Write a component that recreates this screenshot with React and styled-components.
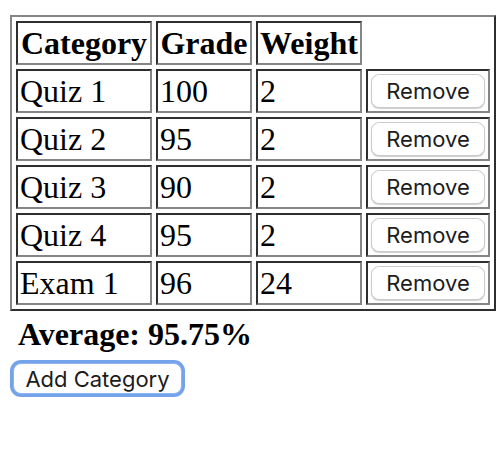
import React, { useState } from 'react';
import styled, { createGlobalStyle } from 'styled-components';

const GlobalStyle = createGlobalStyle`
    body {
        margin: 0;
        background: #ffffff;
        font-family: 'Liberation Serif', 'Times New Roman', serif;
        color: #000000;
    }
`;

const Page = styled.div`
    padding: 15px 0 40px 10px;
`;

const GradeTable = styled.table`
    border-collapse: separate;
    border-spacing: 4px;
    border: 2px solid;
    border-color: #858585 #2e2e2e #2e2e2e #858585;
    font-size: 32px;
    line-height: 36px;
`;

const HeadCell = styled.th`
    width: ${(p) => p.$w}px;
    padding: 2px;
    border: 2px solid;
    border-color: #2e2e2e #858585 #858585 #2e2e2e;
    font-weight: bold;
    text-align: center;
    white-space: nowrap;
`;

const Cell = styled.td`
    padding: 2px;
    border: 2px solid;
    border-color: #2e2e2e #858585 #858585 #2e2e2e;
    text-align: left;
    vertical-align: middle;
    white-space: nowrap;
`;

const Button = styled.button`
    display: flex;
    align-items: center;
    justify-content: center;
    box-sizing: border-box;
    height: ${(p) => (p.$small ? 31 : 34)}px;
    width: ${(p) => (p.$small ? '169px' : '114px')};
    margin: ${(p) => (p.$small ? '0' : '0 auto')};
    padding: 0;
    background: #ffffff;
    border: 1px solid ${(p) => (p.$focus ? '#8fb3ea' : '#cbcbcb')};
    border-radius: 8px;
    box-shadow: ${(p) =>
        p.$focus
            ? '0 0 0 3px #74a3ec'
            : '0 1px 1px rgba(0, 0, 0, 0.2)'};
    font-family: Inter, 'Noto Sans', sans-serif;
    font-size: 22px;
    color: #1c1c1c;
    cursor: pointer;
`;

const Average = styled.div`
    margin: 5px 0 0 8px;
    font-size: 32px;
    line-height: 36px;
    font-weight: bold;
`;

const AddWrap = styled.div`
    margin: 11px 0 0 3px;
`;

const startRows = [
    { category: 'Quiz 1', grade: 100, weight: 2 },
    { category: 'Quiz 2', grade: 95, weight: 2 },
    { category: 'Quiz 3', grade: 90, weight: 2 },
    { category: 'Quiz 4', grade: 95, weight: 2 },
    { category: 'Exam 1', grade: 96, weight: 24 },
];

const App = () => {
    const [rows, setRows] = useState(startRows);

    const totalWeight = rows.reduce((s, r) => s + r.weight, 0);
    const avg = totalWeight
        ? rows.reduce((s, r) => s + r.grade * r.weight, 0) / totalWeight
        : 0;

    const removeRow = (i) => setRows(rows.filter((_, idx) => idx !== i));
    const addRow = () =>
        setRows([...rows, { category: 'New', grade: 0, weight: 1 }]);

    return (
        <Page>
            <GlobalStyle />
            <GradeTable>
                <thead>
                    <tr>
                        <HeadCell $w={128}>Category</HeadCell>
                        <HeadCell $w={88}>Grade</HeadCell>
                        <HeadCell $w={98}>Weight</HeadCell>
                    </tr>
                </thead>
                <tbody>
                    {rows.map((r, i) => (
                        <tr key={i}>
                            <Cell>{r.category}</Cell>
                            <Cell>{r.grade}</Cell>
                            <Cell>{r.weight}</Cell>
                            <Cell style={{ width: 116 }}>
                                <Button onClick={() => removeRow(i)}>Remove</Button>
                            </Cell>
                        </tr>
                    ))}
                </tbody>
            </GradeTable>
            <Average>Average: {Number(avg.toFixed(2))}%</Average>
            <AddWrap>
                <Button $small $focus onClick={addRow}>
                    Add Category
                </Button>
            </AddWrap>
        </Page>
    );
};

export default App;
